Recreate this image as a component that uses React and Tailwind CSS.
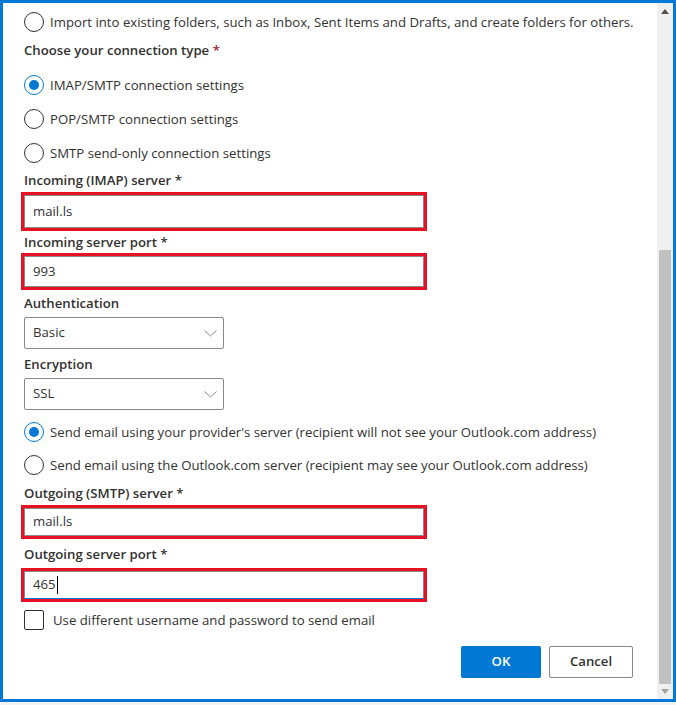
import React from "react";

const font = { fontFamily: '"Open Sans", "Noto Sans", sans-serif' };

function Radio({ checked, children, className = "" }) {
  return (
    <div className={`flex items-center h-[20px] ${className}`}>
      <div
        className={`w-[20px] h-[20px] rounded-full border flex items-center justify-center shrink-0 ${
          checked ? "border-[#0078d4]" : "border-[#323130]"
        }`}
      >
        {checked && <div className="w-[10px] h-[10px] rounded-full bg-[#0078d4]" />}
      </div>
      <span className="ml-[6px] text-[13.2px] text-[#323130] whitespace-nowrap leading-[20px]">{children}</span>
    </div>
  );
}

function Label({ children, req, star, className = "" }) {
  return (
    <div className={`h-[20px] leading-[20px] text-[13.2px] font-semibold text-[#323130] whitespace-nowrap ${className}`}>
      {children}
      {req && <span className="text-[#a4262c]"> *</span>}
      {star && <span> *</span>}
    </div>
  );
}

function RedInput({ value, h, className = "", focused }) {
  return (
    <div className={`-ml-[3px] w-[406px] border-[3px] border-[#e81123] ${className}`} style={{ height: h }}>
      <div
        className={`h-full w-full border border-[#8a8886] flex items-center pl-[8px] text-[13.2px] text-[#323130] ${
          focused ? "border-b-[#0078d4] border-l-[#6a8fb8]" : ""
        }`}
      >
        <span>{value}</span>
        {focused && <span className="ml-[1px] w-[1px] h-[18px] bg-[#000]" />}
      </div>
    </div>
  );
}

function Select({ value, className = "" }) {
  return (
    <div
      className={`w-[200px] h-[32px] border border-[#8a8886] rounded-[2px] flex items-center justify-between pl-[8px] pr-[6px] ${className}`}
    >
      <span className="text-[13.2px] text-[#323130]">{value}</span>
      <svg width="13" height="7" viewBox="0 0 13 7" fill="none">
        <path d="M0.5 0.5 L6.5 6 L12.5 0.5" stroke="#8a8886" strokeWidth="1" />
      </svg>
    </div>
  );
}

export default function App() {
  return (
    <div className="w-[676px] h-[705px] bg-[#f3f3f3]" style={font}>
      <div className="h-[702px] border-[3px] border-[#0078d7] bg-white flex">
        <div className="flex-1 min-w-0 flex flex-col pl-[21px] pt-[9px] pr-[24px]">
          <Radio>Import into existing folders, such as Inbox, Sent Items and Drafts, and create folders for others.</Radio>
          <Label req className="mt-[8px]">Choose your connection type</Label>
          <Radio checked className="mt-[15px]">IMAP/SMTP connection settings</Radio>
          <Radio className="mt-[14px]">POP/SMTP connection settings</Radio>
          <Radio className="mt-[14px]">SMTP send-only connection settings</Radio>
          <Label star className="mt-[7px]">Incoming (IMAP) server</Label>
          <RedInput value="mail.ls" h={39} className="mt-[2px]" />
          <Label star className="mt-[1px]">Incoming server port</Label>
          <RedInput value="993" h={37} className="mt-[1px]" />
          <Label className="mt-[3px]">Authentication</Label>
          <Select value="Basic" className="mt-[4px]" />
          <Label className="mt-[5px]">Encryption</Label>
          <Select value="SSL" className="mt-[4px]" />
          <Radio checked className="mt-[12px]">
            Send email using your provider's server (recipient will not see your Outlook.com address)
          </Radio>
          <Radio className="mt-[13px]">
            Send email using the Outlook.com server (recipient may see your Outlook.com address)
          </Radio>
          <Label star className="mt-[8px]">Outgoing (SMTP) server</Label>
          <RedInput value="mail.ls" h={34} className="mt-[2px]" />
          <Label star className="mt-[5px]">Outgoing server port</Label>
          <RedInput value="465" h={34} className="mt-[4px]" focused />
          <div className="mt-[8px] flex items-center h-[20px]">
            <div className="w-[20px] h-[20px] border border-[#323130] rounded-[2px]" />
            <span className="ml-[9px] text-[13.2px] text-[#323130] leading-[20px]">
              Use different username and password to send email
            </span>
          </div>
          <div className="mt-[16px] flex justify-end gap-[8px]">
            <button className="w-[80px] h-[32px] bg-[#0078d4] rounded-[2px] text-white text-[13.2px] font-semibold">OK</button>
            <button className="w-[84px] h-[32px] bg-white border border-[#8a8886] rounded-[2px] text-[#323130] text-[13.2px] font-semibold">
              Cancel
            </button>
          </div>
        </div>
        <div className="w-[16px] bg-[#f0f0f0] flex flex-col">
          <div className="h-[17px] flex items-center justify-center">
            <svg width="8" height="5" viewBox="0 0 8 5">
              <path d="M0 5 L4 0 L8 5 Z" fill="#505050" />
            </svg>
          </div>
          <div className="mt-[230px] mx-[2px] h-[434px] bg-[#c1c1c1]" />
          <div className="flex-1 flex items-center justify-center">
            <svg width="8" height="5" viewBox="0 0 8 5">
              <path d="M0 0 L8 0 L4 5 Z" fill="#a3a3a3" />
            </svg>
          </div>
        </div>
      </div>
    </div>
  );
}
